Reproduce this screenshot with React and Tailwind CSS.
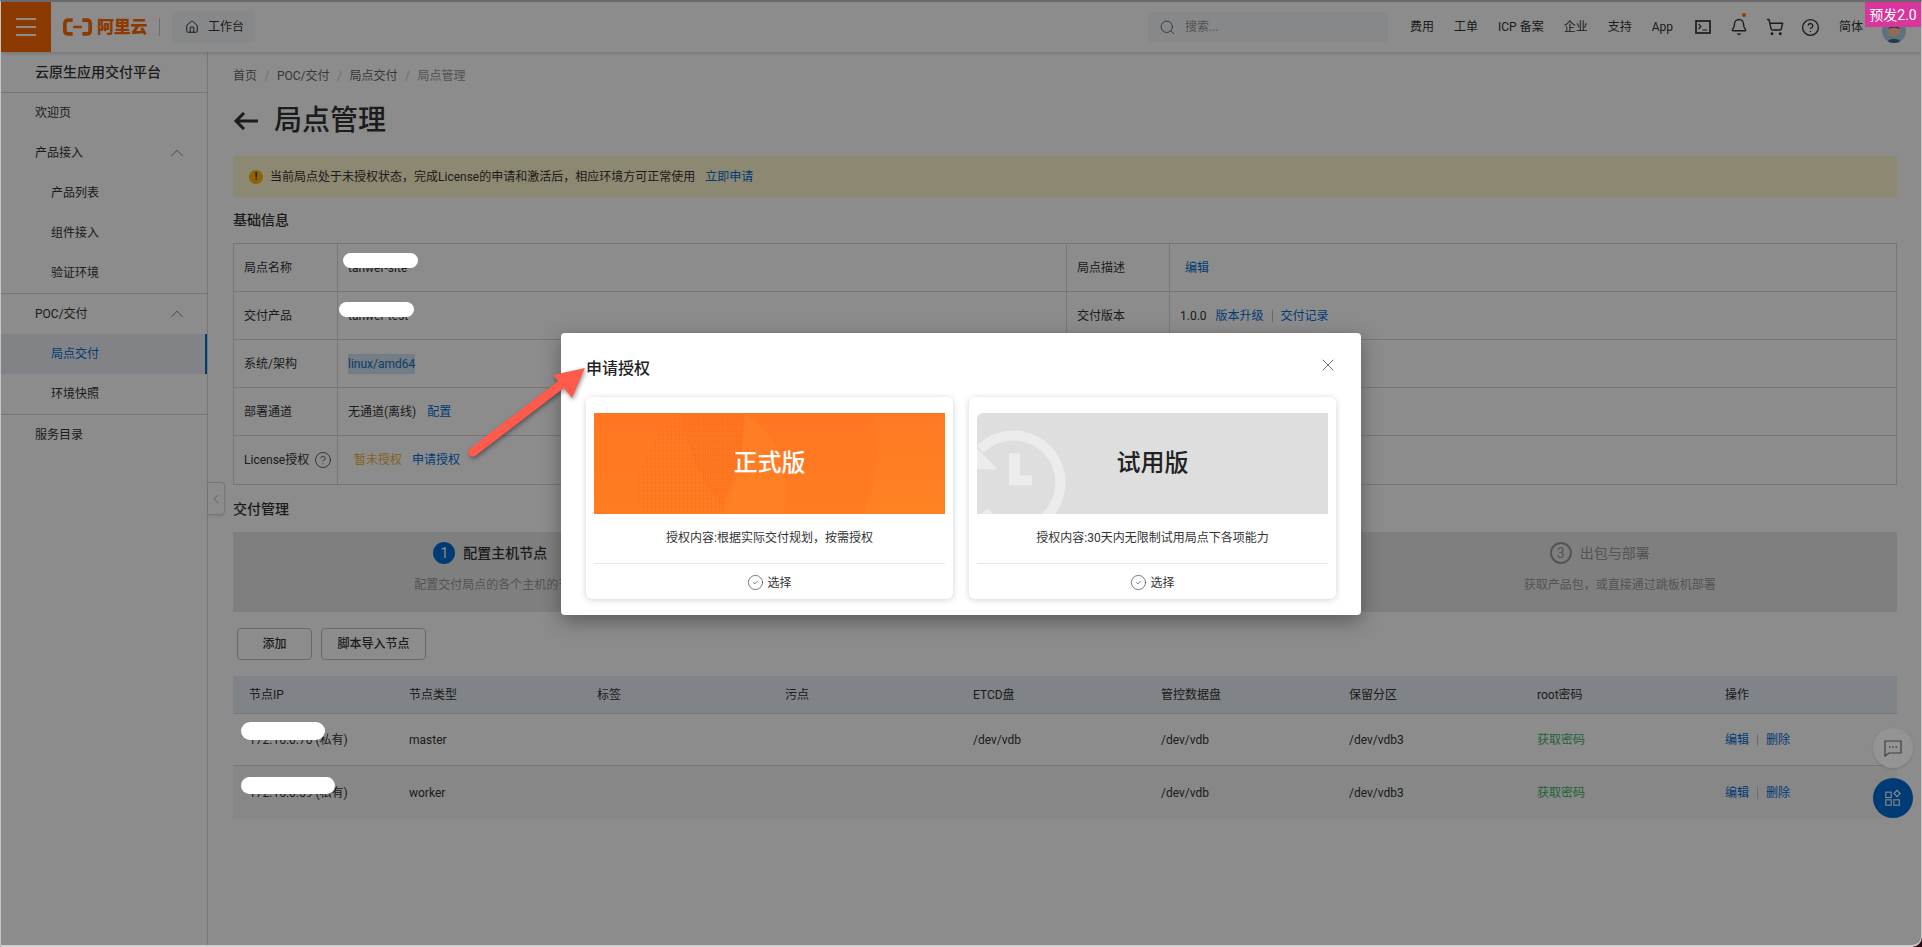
import React from 'react'
import { Bell, ChevronLeft, ChevronUp, CircleCheck, CircleHelp, House, Search, ShoppingCart, X } from 'lucide-react'

const Link = ({ children, className = '' }) => <span className={`text-[#006cd8] ${className}`}>{children}</span>

const MenuItem = ({ label, sub, open, active }) => (
    <div className={`relative h-10 flex items-center text-xs ${sub ? 'pl-[50px]' : 'pl-[34px]'} ${active ? 'bg-[#eceff5] text-[#006cd8]' : 'text-[#333]'}`}>
        {label}
        {open && <ChevronUp size={22} strokeWidth={0.8} className="absolute right-[19px] text-[#555]" />}
        {active && <span className="absolute right-0 inset-y-0 w-[2px] bg-[#006cd8]" />}
    </div>
)

const Sidebar = () => (
    <aside className="w-[207px] shrink-0 border-r border-[#d9d9d9] flex flex-col">
        <div className="h-[41px] flex items-center pl-[34px] text-sm font-medium text-[#333] border-b border-[#d9d9d9]">云原生应用交付平台</div>
        <div className="border-b border-[#d9d9d9]">
            <MenuItem label="欢迎页" />
            <MenuItem label="产品接入" open />
            <MenuItem label="产品列表" sub />
            <MenuItem label="组件接入" sub />
            <MenuItem label="验证环境" sub />
        </div>
        <div className="border-b border-[#d9d9d9]">
            <MenuItem label="POC/交付" open />
            <MenuItem label="局点交付" sub active />
            <MenuItem label="环境快照" sub />
        </div>
        <MenuItem label="服务目录" />
    </aside>
)

const InfoRow = ({ label, children, rightLabel, right, last }) => (
    <div className={`grid grid-cols-[104px_728px_104px_1fr] h-12 text-xs text-[#333] ${last ? '' : 'border-b border-[#d9d9d9]'}`}>
        <div className="flex items-center gap-[5px] pl-[10px] border-r border-[#d9d9d9]">{label}</div>
        <div className="flex items-center pl-[10px]">{children}</div>
        <div className="flex items-center pl-[10px] border-x border-[#d9d9d9]">{rightLabel}</div>
        <div className="flex items-center">{right}</div>
    </div>
)

const Step = ({ n, title, desc, active }) => (
    <div className="flex flex-col items-center pt-[10px]">
        <div className="flex items-center gap-2 h-[22px] mr-[40px]">
            {active
                ? <span className="w-[22px] h-[22px] rounded-full bg-[#006cd8] text-white text-sm flex items-center justify-center">{n}</span>
                : <span className="w-[22px] h-[22px] rounded-full border-2 border-[#999] text-[#999] text-sm flex items-center justify-center">{n}</span>}
            <span className={`text-sm ${active ? 'font-medium text-[#333]' : 'text-[#999]'}`}>{title}</span>
        </div>
        <div className="mt-[13px] text-xs text-[#999]">{desc}</div>
    </div>
)

const columns = ['节点IP', '节点类型', '标签', '污点', 'ETCD盘', '管控数据盘', '保留分区', 'root密码', '操作']
const rows = [
    { ip: '172.16.0.70 (私有)', type: 'master', etcd: '/dev/vdb', bg: 'h-[52px] border-b border-[#d9d9d9]' },
    { ip: '172.16.0.59 (私有)', type: 'worker', etcd: '', bg: 'h-[53px] bg-[#f6f6f6]' },
]
const gridCols = 'grid grid-cols-[160px_repeat(8,188px)]'

const NodeTable = () => (
    <div className="mt-4 text-xs text-[#333]">
        <div className={`${gridCols} h-[38px] items-center bg-[#e9eef6] border-b border-[#d9d9d9]`}>
            {columns.map((c) => <div key={c} className="pl-4">{c}</div>)}
        </div>
        {rows.map((r) => (
            <div key={r.ip} className={`${gridCols} items-center ${r.bg}`}>
                <div className="pl-4">{r.ip}</div>
                <div className="pl-4">{r.type}</div>
                <div />
                <div />
                <div className="pl-4">{r.etcd}</div>
                <div className="pl-4">/dev/vdb</div>
                <div className="pl-4">/dev/vdb3</div>
                <div className="pl-4 text-[#3db46a]">获取密码</div>
                <div className="pl-4 flex items-center gap-2">
                    <Link>编辑</Link>
                    <span className="w-px h-3 bg-[#c4c4c4]" />
                    <Link>删除</Link>
                </div>
            </div>
        ))}
    </div>
)

const LicenseCard = ({ banner, text }) => (
    <div className="rounded-md bg-white shadow-[0_1px_6px_rgba(0,0,0,0.18)] px-2 pt-4 flex flex-col">
        {banner}
        <div className="h-[50px] flex items-center justify-center text-xs text-[#333] border-b border-[#e8e8e8]">{text}</div>
        <div className="h-[35px] flex items-center justify-center gap-[3px] pt-[3px] text-xs text-[#333]">
            <CircleCheck size={17} strokeWidth={0.9} />
            选择
        </div>
    </div>
)

const OrangeBanner = () => (
    <div className="relative h-[101px] bg-gradient-to-b from-[#ff7924] to-[#ff8222] overflow-hidden flex items-center justify-center text-2xl font-medium text-white">
        <svg viewBox="0 0 351 100" className="absolute inset-0 w-full h-full">
            <defs>
                <pattern id="sparse" width="4" height="4" patternUnits="userSpaceOnUse">
                    <circle cx="1.5" cy="1.5" r="0.6" fill="#f0641a" />
                </pattern>
                <pattern id="dense" width="2.4" height="2.4" patternUnits="userSpaceOnUse">
                    <circle cx="1" cy="1" r="0.6" fill="#f0641a" />
                </pattern>
            </defs>
            <circle cx="135" cy="38" r="148" fill="#ff7420" opacity="0.4" />
            <path d="M86 0 Q50 30 43 74 Q42 90 50 100 H140 Q110 70 86 0 Z" fill="url(#sparse)" />
            <path d="M86 0 H152 Q150 40 140 62 Q134 82 128 92 Q100 60 86 0 Z" fill="url(#dense)" />
            <path d="M150 0 Q200 30 190 100 H128 Q150 60 150 0 Z" fill="#ff8a2c" opacity="0.35" />
        </svg>
        <span className="relative">正式版</span>
    </div>
)

const GrayBanner = () => (
    <div className="relative h-[101px] bg-[#dedede] rounded-tl-md overflow-hidden flex items-center justify-center text-2xl font-medium text-[#222]">
        <svg viewBox="0 0 351 100" className="absolute inset-0 w-full h-full">
            <path d="M3 36 A47 47 0 1 1 36 116" fill="none" stroke="#ececec" strokeWidth="10" />
            <path d="M0 35 L21 56 L0 56 Z" fill="#ececec" />
            <path d="M32 40 H43 V62 H55 V72 H32 Z" fill="#ececec" />
            <path d="M10 95 L16 100 H4 Z" fill="#ececec" />
        </svg>
        <span className="relative">试用版</span>
    </div>
)

const LicenseDialog = () => (
    <div className="absolute inset-0 z-10 bg-black/45 flex items-center justify-center">
        <div className="relative w-[800px] h-[282px] bg-white rounded-sm shadow-[0_6px_20px_rgba(0,0,0,0.35)] px-[25px] pt-6">
            <div className="h-6 flex items-center text-base font-medium text-[#222]">申请授权</div>
            <X size={20} strokeWidth={1} className="absolute top-[22px] right-[23px] text-[#555]" />
            <div className="mt-4 grid grid-cols-2 gap-4">
                <LicenseCard banner={<OrangeBanner />} text="授权内容:根据实际交付规划，按需授权" />
                <LicenseCard banner={<GrayBanner />} text="授权内容:30天内无限制试用局点下各项能力" />
            </div>
        </div>
    </div>
)

const TopBar = () => (
    <header className="h-[50px] shrink-0 bg-white shadow-[0_1px_4px_rgba(0,0,0,0.2)] flex items-center text-xs text-[#333] relative">
        <div className="w-[50px] h-full bg-[#ff6a00] flex flex-col items-center justify-center gap-[6px]">
            <span className="w-[20px] h-[2px] bg-white" />
            <span className="w-[20px] h-[2px] bg-white" />
            <span className="w-[20px] h-[2px] bg-white" />
        </div>
        <div className="ml-[12px] flex items-center text-[#ff6a00]">
            <svg viewBox="0 0 30 18" className="w-[29px] h-[18px]" fill="none" stroke="currentColor" strokeWidth="3.8">
                <path d="M10 1.9 H5.5 Q1.9 1.9 1.9 5.5 V12.5 Q1.9 16.1 5.5 16.1 H10" />
                <path d="M20 1.9 H24.5 Q28.1 1.9 28.1 5.5 V12.5 Q28.1 16.1 24.5 16.1 H20" />
                <path d="M10.5 9 H19.5" strokeWidth="2.4" />
            </svg>
            <span className="ml-[5px] text-[17px] font-black leading-none tracking-[-0.3px]">阿里云</span>
        </div>
        <span className="ml-[12px] w-px h-[18px] bg-[#c8c8c8]" />
        <div className="ml-[12px] w-[83px] h-8 rounded bg-[#f6f8fb] flex items-center pl-[13px] gap-[9px]">
            <House size={14} strokeWidth={1.7} />
            工作台
        </div>
        <div className="ml-auto flex items-center pr-[15px]">
            <div className="w-[240px] h-[30px] bg-[#f6f8fb] flex items-center pl-[11px] gap-[9px] text-[#999]">
                <Search size={17} strokeWidth={1.2} className="text-[#555]" />
                搜索...
            </div>
            <nav className="ml-[22px] flex items-center gap-[20px]">
                <span>费用</span>
                <span>工单</span>
                <span>ICP 备案</span>
                <span>企业</span>
                <span>支持</span>
                <span>App</span>
            </nav>
            <div className="ml-[12px] flex items-center">
                <span className="w-9 flex justify-center">
                    <svg viewBox="0 0 16 14" className="w-[16px] h-[14px]" fill="none" stroke="currentColor" strokeWidth="1.7">
                        <rect x="1" y="1" width="14" height="12" />
                        <path d="M3.5 4 L6 6.5 L3.5 9 M7.5 10 H12" strokeWidth="1.1" />
                    </svg>
                </span>
                <span className="relative w-9 flex justify-center">
                    <Bell size={18} strokeWidth={1.8} />
                    <span className="absolute top-[-5px] right-[11px] w-1 h-1 rounded-full bg-[#ff6a00]" />
                </span>
                <span className="w-9 flex justify-center"><ShoppingCart size={18} strokeWidth={1.9} /></span>
                <span className="w-9 flex justify-center"><CircleHelp size={19} strokeWidth={1.7} /></span>
            </div>
            <span className="ml-[10px]">简体</span>
            <span className="ml-[19px] w-6 h-6 rounded-full overflow-hidden mt-[8px]">
                <svg viewBox="0 0 28 28" className="w-6 h-6">
                    <rect width="28" height="28" fill="#a8d0e6" />
                    <circle cx="14" cy="14" r="7" fill="#ffc8a0" />
                    <path d="M7 12 Q14 2 21 12 Q14 8 7 12 Z" fill="#4a3a32" />
                    <path d="M4 28 Q14 18 24 28 Z" fill="#3f6f8f" />
                </svg>
            </span>
        </div>
    </header>
)

const App = () => (
    <div className="relative w-[1922px] h-[947px] overflow-hidden bg-[#2a0a14] font-['Roboto','Noto_Sans_CJK_SC',sans-serif]">
        <div className="relative h-full overflow-hidden bg-white flex flex-col border-t-2 border-t-[#6a6a6a] border-x border-x-[#c4c4c4] border-b-2 border-b-[#d0d0d0] rounded-br-[10px]">
            <TopBar />
            <div className="flex-1 flex min-h-0">
                <Sidebar />
                <main className="relative flex-1 pl-[25px] pr-[24px] pt-[14px] text-[#333]">
                    <button className="absolute left-0 top-[430px] w-[17px] h-[33px] bg-white border border-[#d9d9d9] border-l-0 rounded-r-sm shadow-sm flex items-center justify-center text-[#777]">
                        <ChevronLeft size={26} strokeWidth={0.8} />
                    </button>
                    <div className="h-5 flex items-center gap-[7.5px] text-xs text-[#666]">
                        <span>首页</span><span className="text-[#ccc]">/</span>
                        <span>POC/交付</span><span className="text-[#ccc]">/</span>
                        <span>局点交付</span><span className="text-[#ccc]">/</span>
                        <span className="text-[#999]">局点管理</span>
                    </div>
                    <div className="mt-[15px] h-10 flex items-center gap-[16px]">
                        <svg viewBox="0 0 25 18" className="w-[25px] h-[18px]" fill="none" stroke="#333" strokeWidth="3">
                            <path d="M11 1 L3 9 L11 17 M3 9 H25" />
                        </svg>
                        <h1 className="text-[28px] font-medium text-[#333]">局点管理</h1>
                    </div>
                    <div className="mt-[15px] h-[41px] bg-[#fff7cf] flex items-center pl-4 gap-[7px] text-xs">
                        <span className="w-[14px] h-[14px] rounded-full bg-[#ffb800] flex items-center justify-center text-[11px] font-bold text-[#333] leading-none">!</span>
                        当前局点处于未授权状态，完成License的申请和激活后，相应环境方可正常使用
                        <Link className="ml-[3px]">立即申请</Link>
                    </div>
                    <h2 className="mt-[13px] h-5 flex items-center text-sm font-medium">基础信息</h2>
                    <div className="mt-[13px] border border-[#d9d9d9]">
                        <InfoRow label="局点名称" rightLabel="局点描述" right={<Link className="pl-[15px] text-xs">编辑</Link>}>
                            <span>tanwer-site</span>
                        </InfoRow>
                        <InfoRow label="交付产品" rightLabel="交付版本" right={
                            <span className="pl-[10px] flex items-center gap-[8px]">
                                1.0.0 <Link className="ml-[1px]">版本升级</Link>
                                <span className="w-px h-3 bg-[#c4c4c4]" />
                                <Link>交付记录</Link>
                            </span>
                        }>
                            <span>tanwer-test</span>
                        </InfoRow>
                        <InfoRow label="系统/架构">
                            <span className="h-5 flex items-center bg-[#cfe3f5] text-[#1f6fb0]">linux/amd64</span>
                        </InfoRow>
                        <InfoRow label="部署通道">
                            无通道(离线)
                            <Link className="ml-[11px]">配置</Link>
                        </InfoRow>
                        <InfoRow label={<>License授权 <CircleHelp size={18} strokeWidth={1} /></>} last>
                            <span className="ml-[6px] text-[#f0b03c]">暂未授权</span>
                            <Link className="ml-[10px]">申请授权</Link>
                        </InfoRow>
                    </div>
                    <h2 className="mt-[14px] h-5 flex items-center text-sm font-medium">交付管理</h2>
                    <div className="mt-[13px] h-[80px] bg-[#e8e8e8] grid grid-cols-3">
                        <Step n="1" title="配置主机节点" desc="配置交付局点的各个主机的节点角色" active />
                        <Step n="2" title="配置与校验" desc="配置交付参数并完成校验" />
                        <Step n="3" title="出包与部署" desc="获取产品包，或直接通过跳板机部署" />
                    </div>
                    <div className="mt-4 ml-1 flex gap-[9px] text-xs font-medium">
                        <button className="w-[75px] h-8 border border-[#c4c4c4] rounded-sm">添加</button>
                        <button className="w-[105px] h-8 border border-[#c4c4c4] rounded-sm">脚本导入节点</button>
                    </div>
                    <NodeTable />
                    <div className="absolute z-20 right-[8px] top-[676px] w-10 h-10 rounded-full bg-[#949494] shadow flex items-center justify-center">
                        <svg viewBox="0 0 18 17" className="w-[18px] h-[17px]" fill="none" stroke="#404040" strokeWidth="1.2">
                            <path d="M1 1 H17 V13 H5 L1 16 Z" />
                            <path d="M5 7 H6.4 M8.3 7 H9.7 M11.6 7 H13" strokeWidth="1.6" />
                        </svg>
                    </div>
                    <div className="absolute right-[8px] top-[726px] w-10 h-10 rounded-full bg-[#006cd8] flex items-center justify-center">
                        <svg viewBox="0 0 20 20" className="w-[18px] h-[18px]" fill="none" stroke="#fff" strokeWidth="1.2">
                            <rect x="2" y="3.5" width="6" height="6" />
                            <rect x="2" y="12" width="6" height="6" />
                            <rect x="11" y="12" width="6" height="6" />
                            <path d="M14.5 1.5 L18 5 L14.5 8.5 L11 5 Z" />
                        </svg>
                    </div>
                </main>
            </div>
            <LicenseDialog />
        </div>
        <div className="absolute z-20 left-[343px] top-[253px] w-[75px] h-[15px] rounded-full bg-white" />
        <div className="absolute z-20 left-[339px] top-[302px] w-[75px] h-[15px] rounded-full bg-white" />
        <div className="absolute z-20 left-[241px] top-[722px] w-[84px] h-[18px] rounded-full bg-white" />
        <div className="absolute z-20 left-[241px] top-[777px] w-[94px] h-[17px] rounded-full bg-white" />
        <div className="absolute z-20 right-[1px] top-[2px] w-[56px] h-[25px] bg-[#d9359c] text-white text-sm flex items-center justify-center">预发2.0</div>
        <svg viewBox="0 0 140 110" className="absolute z-20 left-[458px] top-[358px] w-[140px] h-[110px] drop-shadow-[1px_2px_2px_rgba(0,0,0,0.4)]">
            <path d="M15 94 L105 25" stroke="#ff5a4b" strokeWidth="9" strokeLinecap="round" />
            <path d="M127 10 L95 17 L114 40 Z" fill="#ff5a4b" />
        </svg>
    </div>
)

export default App
